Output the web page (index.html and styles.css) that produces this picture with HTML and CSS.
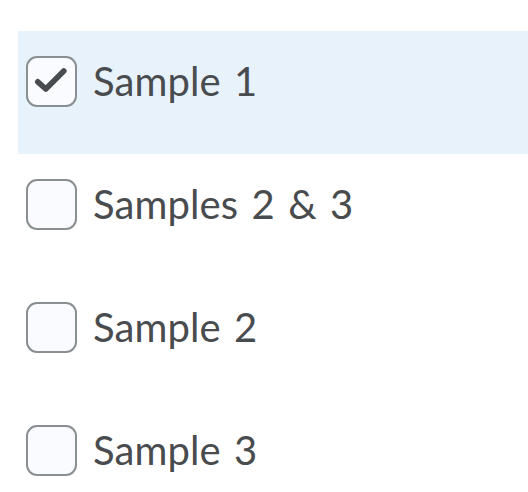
FILE: index.html
```html
<!DOCTYPE html>
<html lang="en">
<head>
<meta charset="utf-8">
<title>Checkboxes</title>
<link rel="stylesheet" href="styles.css">
</head>
<body>
<ul class="list">
  <li class="item selected">
    <span class="box checked">
      <svg class="check" width="47" height="47" viewBox="0 0 47 47"><polyline points="9.8,23.8 17.8,31 35.8,13" fill="none" stroke="#494c4e" stroke-width="5.6" stroke-linecap="round" stroke-linejoin="round"/></svg>
    </span>
    <span class="label">Sample 1</span>
  </li>
  <li class="item">
    <span class="box"></span>
    <span class="label">Samples 2 &amp; 3</span>
  </li>
  <li class="item">
    <span class="box"></span>
    <span class="label">Sample 2</span>
  </li>
  <li class="item">
    <span class="box"></span>
    <span class="label">Sample 3</span>
  </li>
</ul>
</body>
</html>
```
FILE: styles.css
```css
html, body {
  margin: 0;
  padding: 0;
  background: #ffffff;
}
body {
  font-family: Lato, "Liberation Sans", sans-serif;
  color: #494c4e;
  overflow: hidden;
}
.list {
  list-style: none;
  margin: 0;
  padding: 31px 0 0 18px;
}
.item {
  height: 123px;
  box-sizing: border-box;
  padding: 25px 0 0 8px;
  display: flex;
  align-items: flex-start;
  gap: 16px;
}
.item.selected {
  background: #e8f2fb;
}
.box {
  flex: none;
  width: 51px;
  height: 51px;
  box-sizing: border-box;
  border: 2px solid #8a8f92;
  border-radius: 11px;
  background: #f9fbff;
  display: block;
}
.check {
  display: block;
}
.label {
  font-size: 40px;
  line-height: 51px;
  word-spacing: 3px;
  letter-spacing: 0.1px;
  white-space: nowrap;
}
```
